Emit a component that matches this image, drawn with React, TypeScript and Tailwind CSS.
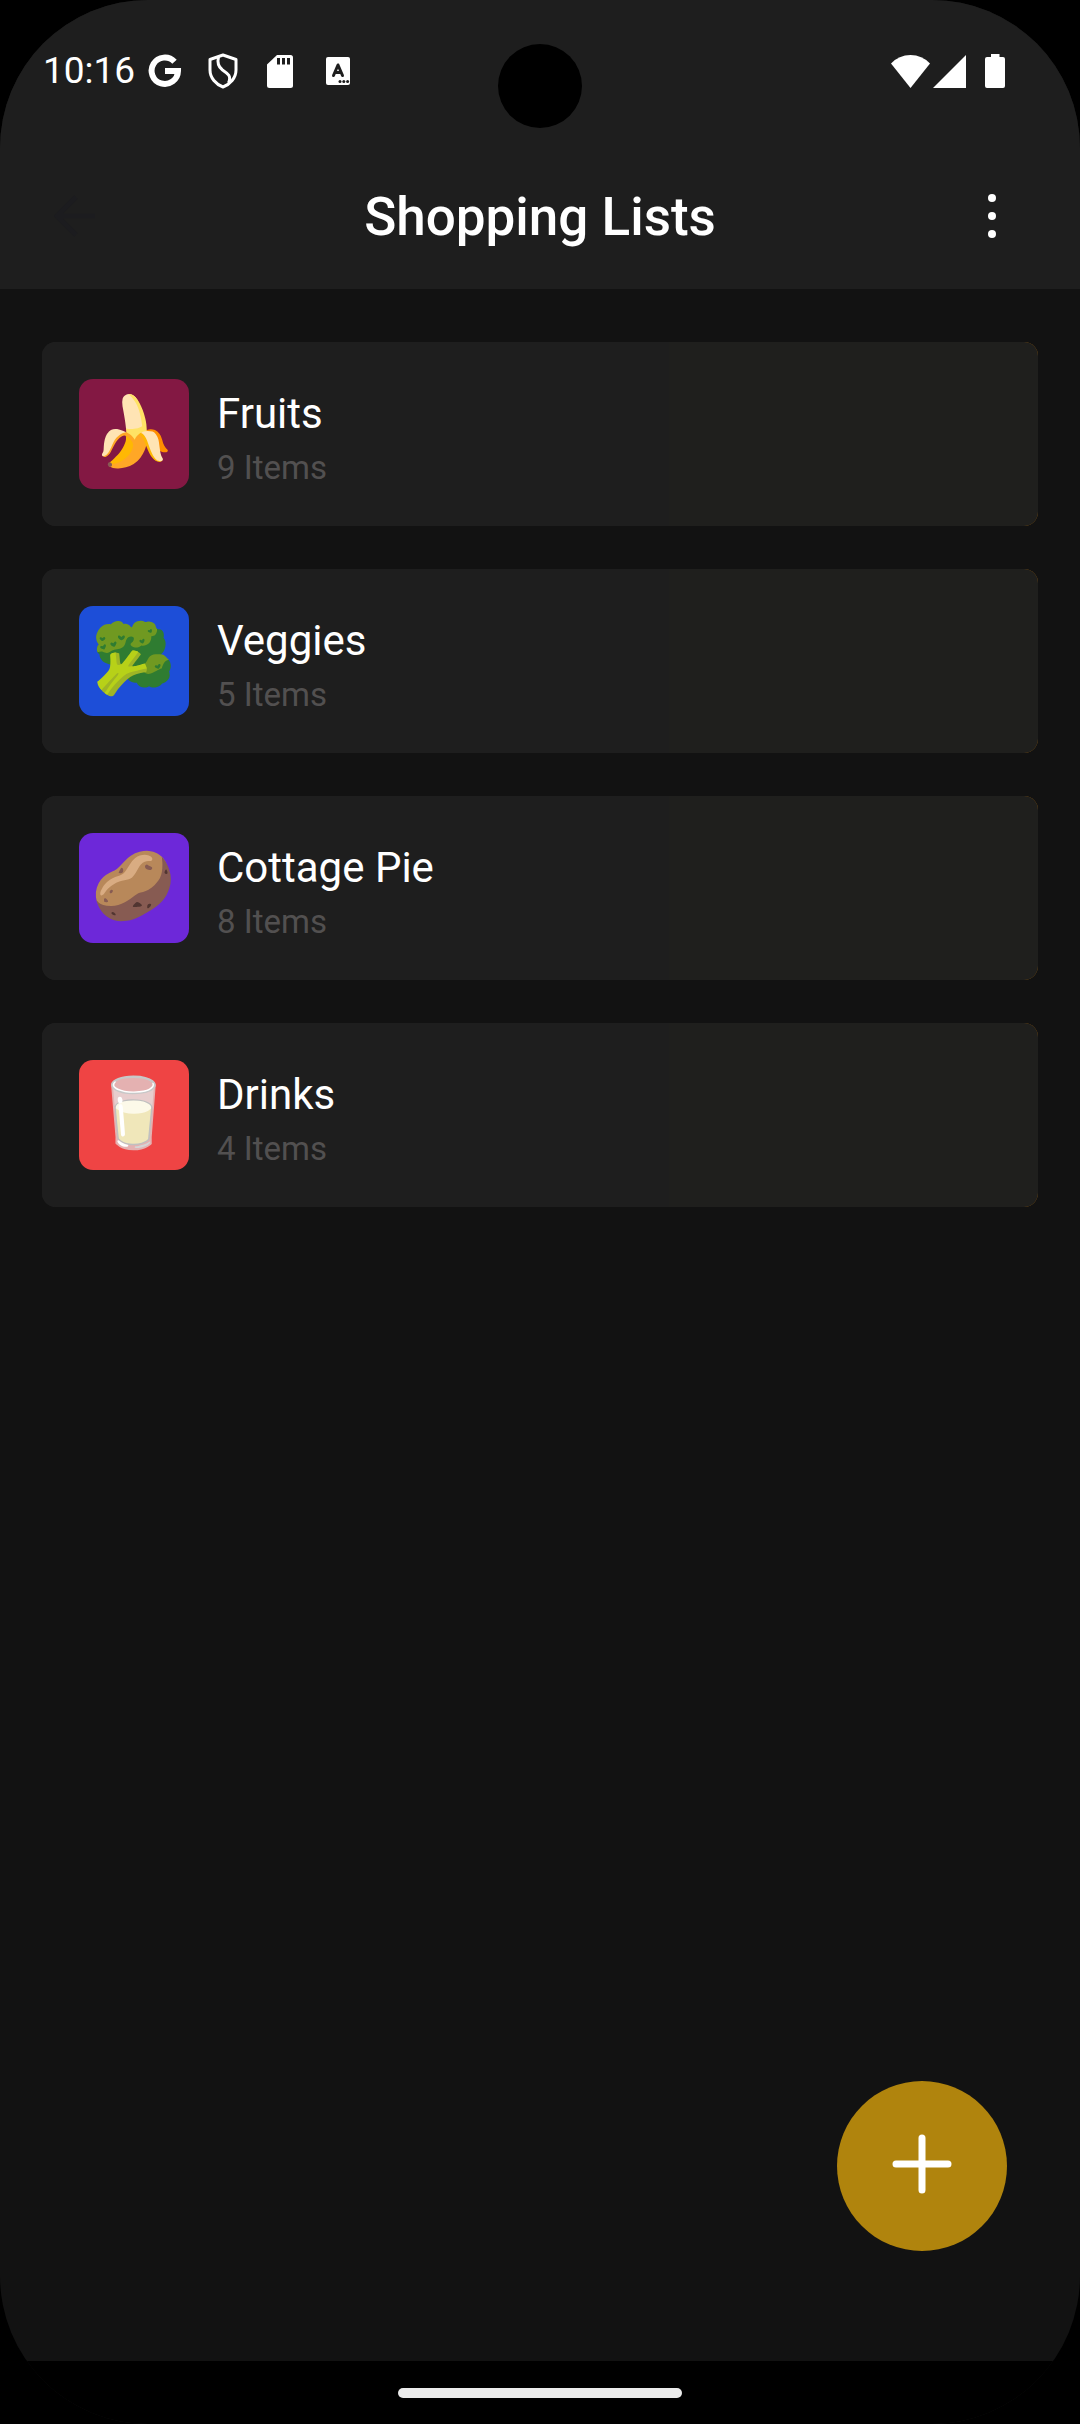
type ShoppingList = { name: string; count: number; emoji: string; tile: string };

const lists: ShoppingList[] = [
  { name: "Fruits", count: 9, emoji: "🍌", tile: "bg-[#831843]" },
  { name: "Veggies", count: 5, emoji: "🥦", tile: "bg-[#1d4ed8]" },
  { name: "Cottage Pie", count: 8, emoji: "🥔", tile: "bg-[#6d28d9]" },
  { name: "Drinks", count: 4, emoji: "🥛", tile: "bg-[#ef4444]" },
];

function GoogleIcon() {
  return (
    <svg width="34" height="34" viewBox="0 0 34 34" fill="none" stroke="white" strokeWidth="6" aria-hidden="true">
      <path d="M26.5 7.8A13.2 13.2 0 1 0 30 17H17" />
    </svg>
  );
}

function ShieldIcon() {
  return (
    <svg width="30" height="36" viewBox="0 0 30 36" fill="none" stroke="white" strokeWidth="3" strokeLinejoin="round" aria-hidden="true">
      <path d="M15 2L28 6.5V17C28 25 22 31.500 15 34C8 31.500 2 25 2 17V6.500Z" />
      <path d="M10.500 4C9 10 10.500 14 14.500 17C19 20 24 22.500 20.500 30" />
    </svg>
  );
}

function SdCardIcon() {
  return (
    <svg width="26" height="33" viewBox="0 0 26 33" aria-hidden="true">
      <path fill="white" d="M10 0H23.500Q26 0 26 2.500V30.500Q26 33 23.500 33H2.500Q0 33 0 30.500V9.500Z" />
      <path fill="#1e1e1e" d="M10 3h3v6.500h-3zM15 3h3v6.500h-3zM20 3h3v6.500h-3z" />
    </svg>
  );
}

function KeyboardIcon() {
  return (
    <svg width="24" height="28" viewBox="0 0 24 28" fill="none" aria-hidden="true">
      <rect width="24" height="28" rx="2" fill="white" />
      <path stroke="#1e1e1e" strokeWidth="3" strokeLinecap="round" strokeLinejoin="round" d="M7.500 18.500L12 8L16.500 18.500M9 15.500H15" />
      <g fill="#1e1e1e">
        <circle cx="14" cy="24.500" r="1.500" />
        <circle cx="17.800" cy="24.500" r="1.500" />
        <circle cx="21.600" cy="24.500" r="1.500" />
      </g>
    </svg>
  );
}

function StatusBar() {
  return (
    <div className="flex h-[142px] items-center justify-between pr-[75px] pl-[43px] text-white">
      <div className="flex items-center">
        <time className="w-[105px] pb-0.5 text-[37px] leading-none">10:16</time>
        <GoogleIcon />
        <span className="ml-[26px]"><ShieldIcon /></span>
        <span className="ml-[29px]"><SdCardIcon /></span>
        <span className="ml-[33px]"><KeyboardIcon /></span>
      </div>
      <div className="flex items-center">
        <svg width="39" height="33" viewBox="0 0 39 33" fill="white" aria-hidden="true">
          <path d="M0 8.500Q8 0 19.500 0T39 8.500L19.500 33Z" />
        </svg>
        <svg className="ml-[3px]" width="33" height="33" viewBox="0 0 33 33" fill="white" aria-hidden="true">
          <path d="M0 33L33 0V33Z" />
        </svg>
        <svg className="ml-[19px]" width="20" height="34" viewBox="0 0 20 34" fill="white" aria-hidden="true">
          <path d="M6 0H14.500V3H18Q20 3 20 5V32Q20 34 18 34H2Q0 34 0 32V5Q0 3 2 3H6Z" />
        </svg>
      </div>
    </div>
  );
}

function TitleBar() {
  return (
    <div className="grid h-[147px] grid-cols-[1fr_auto_1fr] items-center px-[54px]">
      <button type="button" aria-label="Back" className="justify-self-start">
        <svg width="42" height="42" viewBox="0 0 42 42" fill="none" stroke="#1c1c1f" strokeWidth="5" aria-hidden="true">
          <path d="M22 2L3 21L22 40M3 21H41" />
        </svg>
      </button>
      <h1 className="pt-1 text-[53px] leading-none font-medium text-white">Shopping Lists</h1>
      <button type="button" aria-label="More options" className="mr-[30px] justify-self-end">
        <svg width="8" height="44" viewBox="0 0 8 44" fill="white" aria-hidden="true">
          <circle cx="4" cy="4" r="4" />
          <circle cx="4" cy="22" r="4" />
          <circle cx="4" cy="40" r="4" />
        </svg>
      </button>
    </div>
  );
}

function ListCard({ list }: { list: ShoppingList }) {
  return (
    <li className="rounded-[14px] bg-[linear-gradient(90deg,#1e1e1e_50%,#a16207_50%)]">
      <button
        type="button"
        className="flex w-full items-center gap-7 rounded-[14px] bg-[linear-gradient(90deg,#1e1e1e_63%,#1f1f1d_63%)] p-[37px] text-left"
      >
        <span className={`flex size-[110px] items-center justify-center rounded-[14px] pb-1 text-[68px] leading-none ${list.tile}`}>
          {list.emoji}
        </span>
        <span className="flex flex-col gap-2 pt-2.5">
          <span className="text-[42px] leading-[50px] text-white">{list.name}</span>
          <span className="text-[33px] leading-[42px] text-[#525050]">{list.count} Items</span>
        </span>
      </button>
    </li>
  );
}

export default function App() {
  return (
    <div className="bg-black font-[Roboto,'Noto_Color_Emoji',sans-serif]">
      <div className="relative flex min-h-screen flex-col overflow-hidden rounded-[148px] bg-[#121212]">
        <header className="bg-[#1e1e1e]">
          <StatusBar />
          <TitleBar />
        </header>
        <div className="absolute top-11 left-1/2 size-[84px] -translate-x-1/2 rounded-full bg-black" />
        <main className="flex-1 px-[42px] pt-[53px]">
          <ul className="flex flex-col gap-[43px]">
            {lists.map((list) => (
              <ListCard key={list.name} list={list} />
            ))}
          </ul>
        </main>
        <button
          type="button"
          aria-label="Add list"
          className="absolute right-[73px] bottom-[173px] flex size-[170px] items-center justify-center rounded-full bg-[#b0840d] pb-1"
        >
          <svg width="60" height="60" viewBox="0 0 60 60" stroke="white" strokeWidth="7" strokeLinecap="round" aria-hidden="true">
            <path d="M30 4V56M4 30H56" />
          </svg>
        </button>
        <footer className="flex h-[63px] justify-center bg-black pt-[27px]">
          <div className="h-[10px] w-[284px] rounded-full bg-[#ebebeb]" />
        </footer>
      </div>
    </div>
  );
}
